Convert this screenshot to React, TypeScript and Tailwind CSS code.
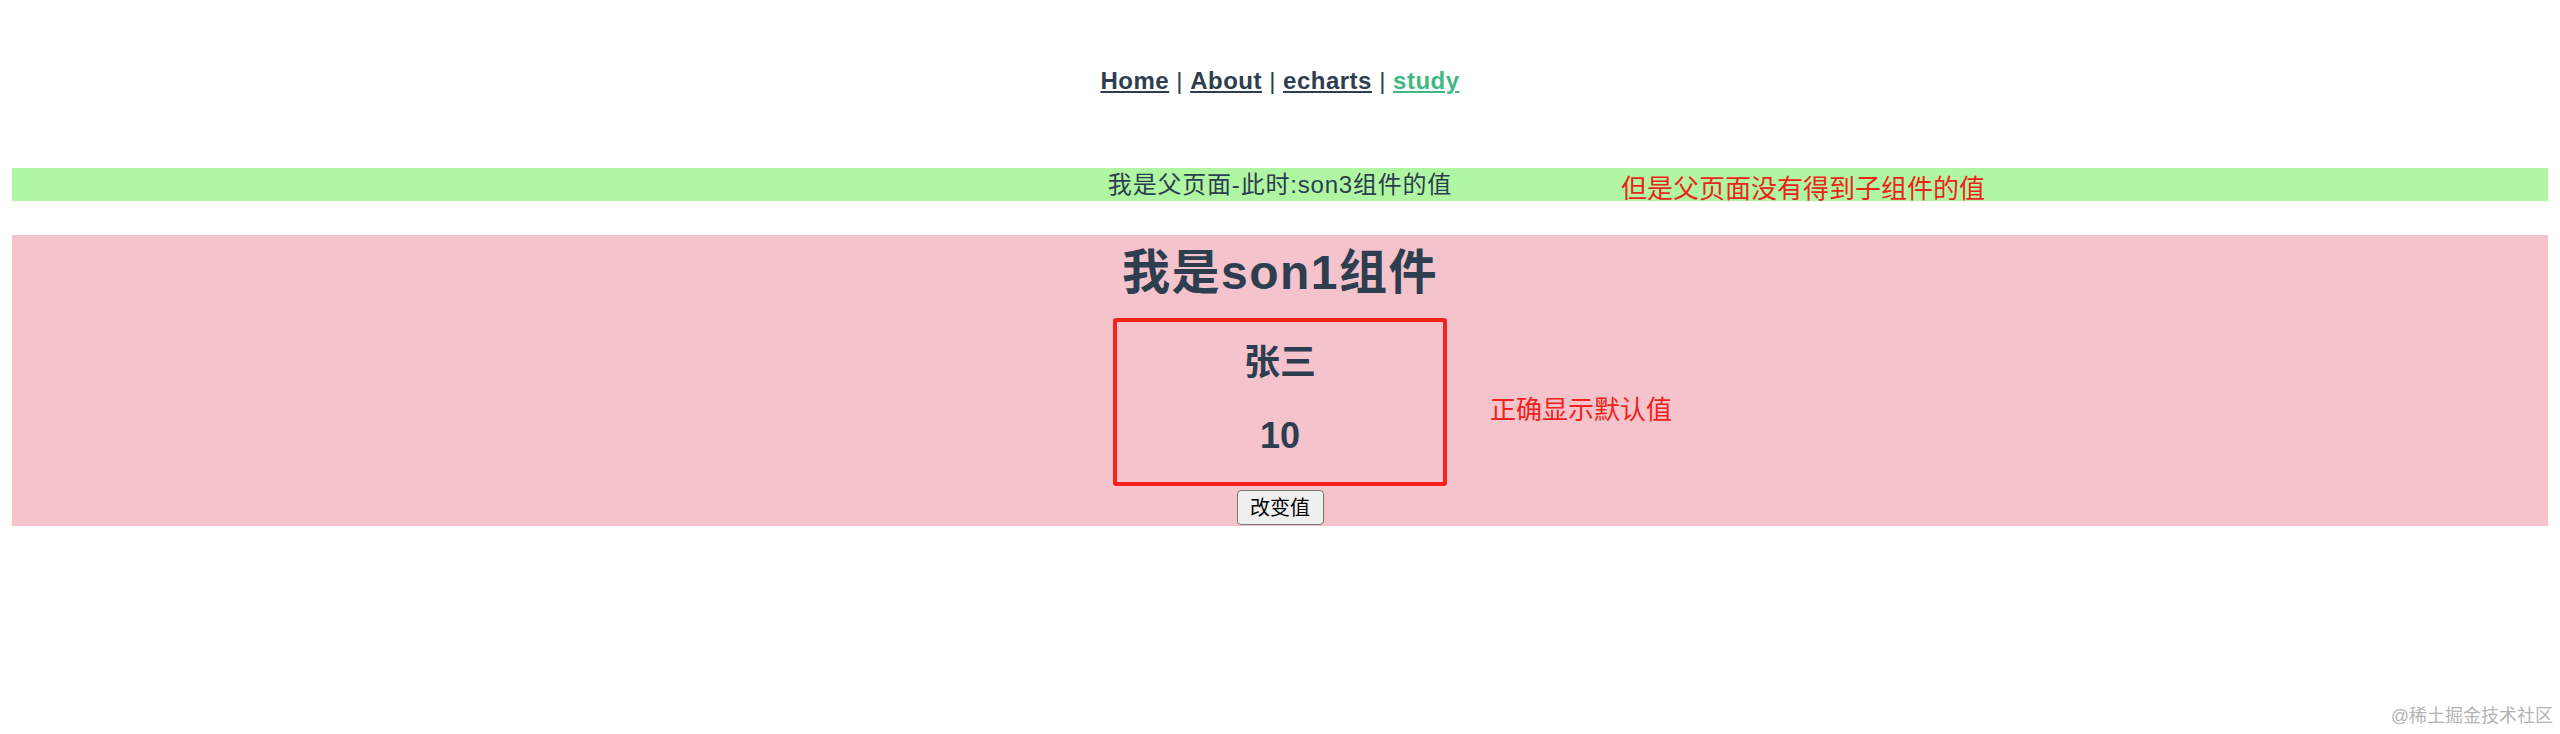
import { useState } from "react";

const font = "font-['Liberation_Sans','Noto_Sans_CJK_SC',sans-serif]";

export default function App() {
  const [person] = useState({ name: "张三", age: 10 });

  return (
    <div className={`relative h-[734px] w-full bg-white px-[12px] pt-[12px] text-[#2c3e50] ${font}`}>
      {/* nav */}
      <nav className="pt-[55px] text-center text-[24px] leading-[28px] font-bold tracking-[0.5px]">
        <a className="underline">Home</a>
        <span className="font-normal"> | </span>
        <a className="underline">About</a>
        <span className="font-normal"> | </span>
        <a className="underline">echarts</a>
        <span className="font-normal"> | </span>
        <a className="text-[#42b983] underline">study</a>
      </nav>

      {/* parent */}
      <div className="relative mt-[73px] h-[33px] bg-[#b0f6a2] text-center text-[24px] leading-[33px] tracking-[0.8px]">
        我是父页面-此时:son3组件的值
        <span className="absolute top-[8px] left-[calc(50%+341px)] text-[26px] leading-[26px] tracking-normal whitespace-nowrap text-[#f0231c]">
          但是父页面没有得到子组件的值
        </span>
      </div>

      {/* son1 */}
      <div className="relative mt-[34px] flex h-[291px] flex-col items-center bg-[#f4c3cb]">
        <h1 className="mt-[10px] text-[48px] leading-[56px] font-bold tracking-[1.5px]">我是son1组件</h1>
        <div className="mt-[17px] flex h-[168px] w-[334px] flex-col items-center rounded-[3px] border-[4px] border-[#f5221b]">
          <h2 className="mt-[21px] text-[36px] leading-[40px] font-bold">{person.name}</h2>
          <h2 className="mt-[33px] text-[36px] leading-[40px] font-bold">{person.age}</h2>
        </div>
        <button className="mt-[4px] h-[35px] w-[87px] rounded-[4px] border border-[#767676] bg-[#efefef] text-[20px] leading-[24px] text-black">
          改变值
        </button>
        <span className="absolute top-[162px] left-[calc(50%+210px)] text-[26px] leading-[26px] whitespace-nowrap text-[#f0231c]">
          正确显示默认值
        </span>
      </div>

      <div className="absolute right-[7px] bottom-[7px] text-[18px] leading-[22px] text-[#b4b4b4]">
        @稀土掘金技术社区
      </div>
    </div>
  );
}
